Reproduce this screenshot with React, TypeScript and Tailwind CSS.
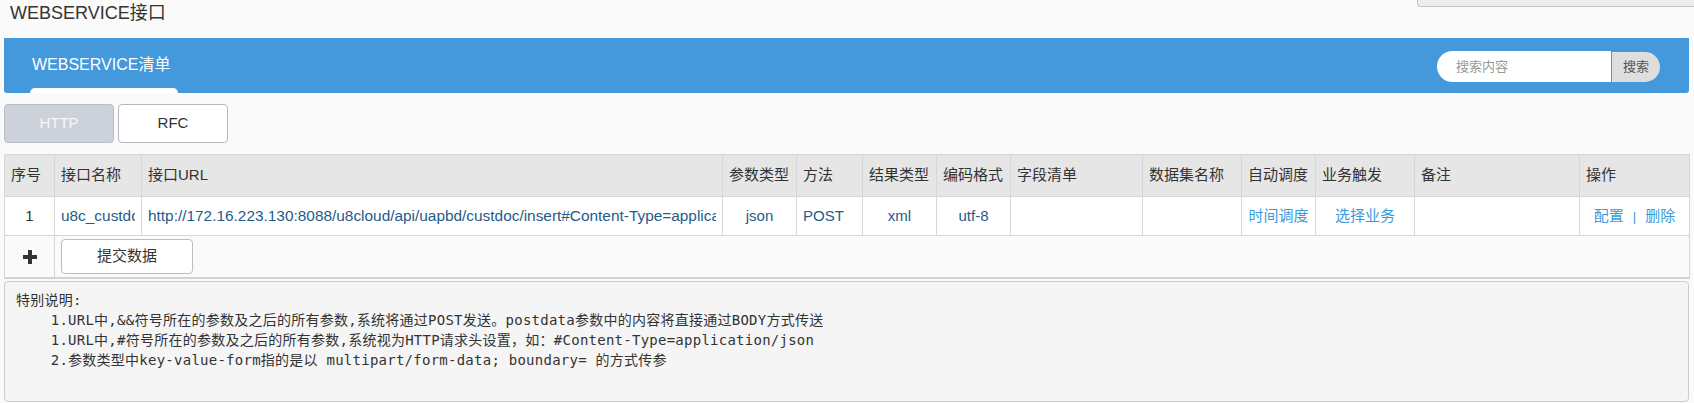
import React from 'react';

export default function App() {
  const headers = ['序号', '接口名称', '接口URL', '参数类型', '方法', '结果类型', '编码格式', '字段清单', '数据集名称', '自动调度', '业务触发', '备注', '操作'];
  const noteLines = [
    '特别说明:',
    '    1.URL中,&&符号所在的参数及之后的所有参数,系统将通过POST发送。postdata参数中的内容将直接通过BODY方式传送',
    '    1.URL中,#符号所在的参数及之后的所有参数,系统视为HTTP请求头设置，如：#Content-Type=application/json',
    '    2.参数类型中key-value-form指的是以 multipart/form-data; boundary= 的方式传参',
    ' ',
  ];
  const cell = 'border border-[#d6d6d6] px-[6px] align-middle';
  return (
    <div className="min-h-screen bg-[#fafafa] font-['Liberation_Sans','Noto_Sans_CJK_SC',sans-serif] text-[#333]">
      <div className="flex h-[38px] items-start">
        <h1 className="pl-[10px] text-[18px] leading-[26px] font-normal text-[#333]">WEBSERVICE接口</h1>
        <div className="ml-auto h-[7px] w-[277px] rounded-bl-[4px] border-b border-l border-[#c4c4c4] bg-[#ececec]" />
      </div>
      <div className="pl-[4px] pr-[5px]">
        <div className="flex h-[55px] justify-between rounded-b-[3px] bg-[#4399dc]">
          <div className="flex flex-col pl-[26px]">
            <div className="mt-[16px] pl-[2px] text-[16px] leading-[22px] text-white">WEBSERVICE清单</div>
            <div className="flex-1" />
            <div className="h-[5px] w-[148px] rounded-t-[5px] bg-white" />
          </div>
          <div className="flex items-center pr-[29px] pt-[2px]">
            <div className="flex h-[31px] w-[174px] items-center rounded-l-full bg-white pl-[19px] text-[13px] text-[#999]">搜索内容</div>
            <div className="ml-[1px] flex h-[30px] w-[48px] items-center justify-center rounded-r-full bg-[#dedede] text-[13px] text-[#555]">搜索</div>
          </div>
        </div>
        <div className="mt-[11px] flex gap-[4px]">
          <button className="flex h-[39px] w-[110px] items-center justify-center rounded-[4px] border border-[#b9bdc6] bg-[#cdd1da] text-[15px] text-[#f7f8fa]">HTTP</button>
          <button className="flex h-[39px] w-[110px] items-center justify-center rounded-[4px] border border-[#b3b7c0] bg-white text-[15px] text-[#333]">RFC</button>
        </div>
        <table className="mt-[11px] w-full table-fixed border-collapse text-[15px]">
          <colgroup>
            <col className="w-[50px]" />
            <col className="w-[87px]" />
            <col className="w-[581px]" />
            <col className="w-[74px]" />
            <col className="w-[66px]" />
            <col className="w-[74px]" />
            <col className="w-[74px]" />
            <col className="w-[132px]" />
            <col className="w-[99px]" />
            <col className="w-[74px]" />
            <col className="w-[99px]" />
            <col className="w-[165px]" />
            <col className="w-[110px]" />
          </colgroup>
          <thead>
            <tr className="h-[42px] bg-[#e6e6e6]">
              {headers.map((h) => (
                <th key={h} className={`${cell} text-left font-normal text-[#333]`}>{h}</th>
              ))}
            </tr>
          </thead>
          <tbody>
            <tr className="h-[39px] bg-white">
              <td className={`${cell} text-center text-[#333]`}>1</td>
              <td className={`${cell} text-[15.4px] text-[#1f5b8b]`}>
                <div className="overflow-hidden whitespace-nowrap">u8c_custdoc</div>
              </td>
              <td className={`${cell} text-[15.4px] text-[#1f5b8b]`}>
                <div className="overflow-hidden whitespace-nowrap">http://172.16.223.130:8088/u8cloud/api/uapbd/custdoc/insert#Content-Type=application/json</div>
              </td>
              <td className={`${cell} text-center text-[#1f5b8b]`}>json</td>
              <td className={`${cell} text-left text-[#1f5b8b]`}>POST</td>
              <td className={`${cell} text-center text-[#1f5b8b]`}>xml</td>
              <td className={`${cell} text-center text-[#1f5b8b]`}>utf-8</td>
              <td className={cell}></td>
              <td className={cell}></td>
              <td className={`${cell} text-center text-[#3a9bdc]`}>时间调度</td>
              <td className={`${cell} text-center text-[#3a9bdc]`}>选择业务</td>
              <td className={cell}></td>
              <td className={`${cell} text-center text-[#3a9bdc]`}>
                <span>配置</span>
                <span className="mx-[9px] text-[13px]">|</span>
                <span>删除</span>
              </td>
            </tr>
            <tr className="h-[42px] bg-[#fafafa]">
              <td className="border border-b-2 border-[#d6d6d6] border-b-[#d2d2d2] text-center">
                <svg width="14" height="14" viewBox="0 0 14 14" className="mx-auto block" fill="#333">
                  <rect x="5" y="0" width="4" height="14" />
                  <rect x="0" y="5" width="14" height="4" />
                </svg>
              </td>
              <td colSpan={12} className="border border-b-2 border-[#d6d6d6] border-b-[#d2d2d2] px-[6px] py-[3px]">
                <button className="flex h-[35px] w-[132px] items-center justify-center rounded-[4px] border border-[#bdbdbd] bg-white text-[15px] text-[#333]">提交数据</button>
              </td>
            </tr>
          </tbody>
        </table>
        <pre className="mt-[2px] rounded-[4px] border border-[#cccccc] bg-[#f5f5f5] pt-[8px] pb-[11px] pl-[11px] font-['DejaVu_Sans_Mono','Noto_Sans_CJK_SC',monospace] text-[14px] leading-[20px] tracking-[0.25px] text-[#333] whitespace-pre">
          {noteLines.join('\n')}
        </pre>
      </div>
    </div>
  );
}
